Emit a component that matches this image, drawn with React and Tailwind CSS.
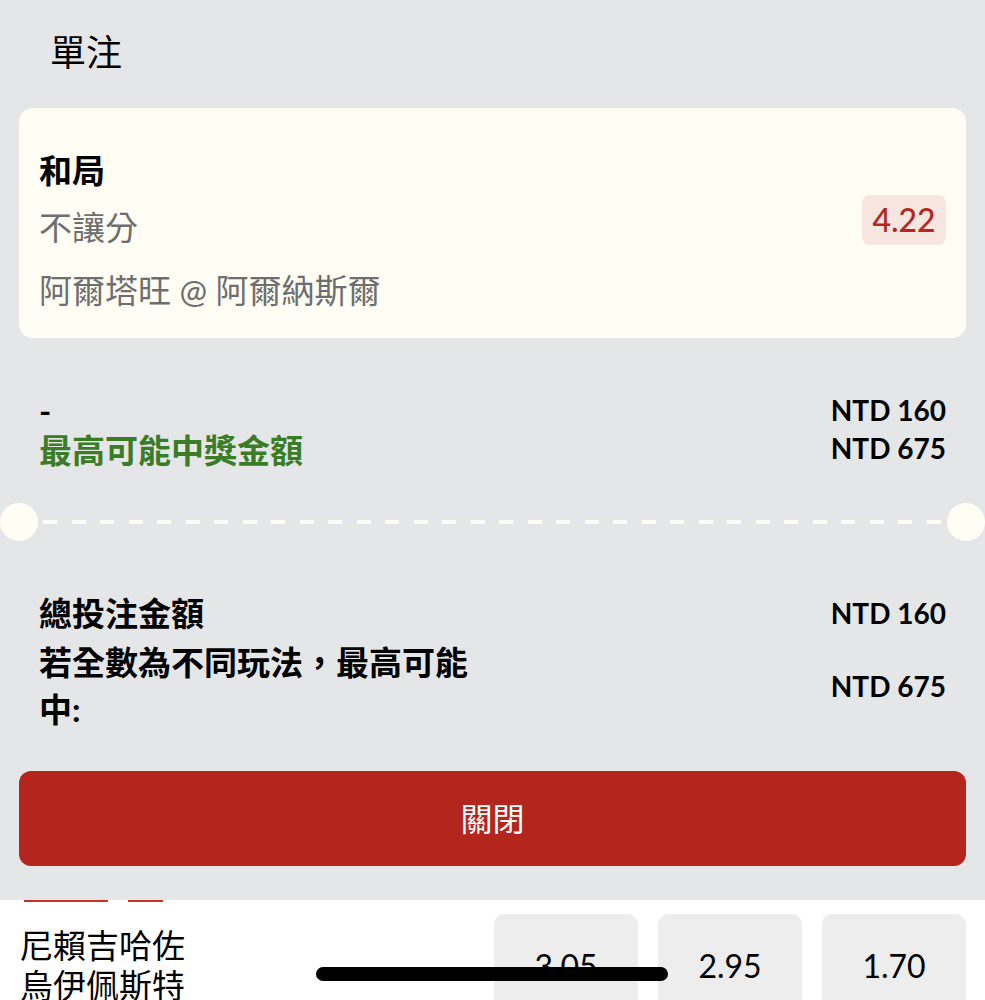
import React from "react"

const odds = ["3.05", "2.95", "1.70"]

const App = () => {
  return (
    <div className="relative min-h-screen overflow-hidden bg-white font-['Lato','Noto_Sans_CJK_TC',sans-serif] text-black">
      {/* Bet slip panel */}
      <div className="bg-[#e5e6e8] px-[19px] pb-[34px]">
        <h1 className="pl-[31px] pt-[32px] text-[36px] leading-[40px] font-normal">單注</h1>

        {/* Selection card */}
        <div className="mt-[36px] flex h-[230px] items-start justify-between rounded-[14px] bg-[#fffdf4] px-[20px] pt-[42px]">
          <div className="flex flex-col">
            <p className="text-[33px] leading-[40px] font-bold">和局</p>
            <p className="mt-[17px] text-[33px] leading-[40px] text-[#6e6e6e]">不讓分</p>
            <p className="mt-[23px] text-[33px] leading-[40px] text-[#6e6e6e]">阿爾塔旺 @ 阿爾納斯爾</p>
          </div>
          <div className="mt-[45px] flex h-[50px] w-[84px] items-center justify-center rounded-[8px] bg-[#f7e6df] text-[32px] font-medium text-[#b3271f]">
            4.22
          </div>
        </div>

        {/* Stake */}
        <div className="mt-[52px] flex justify-between px-[20px]">
          <div className="flex flex-col">
            <p className="text-[33px] leading-[40px] font-bold">-</p>
            <p className="text-[33px] leading-[40px] font-bold text-[#3b7d27]">最高可能中獎金額</p>
          </div>
          <div className="flex flex-col items-end text-[28px] font-bold">
            <p className="leading-[40px]">NTD 160</p>
            <p className="leading-[36px]">NTD 675</p>
          </div>
        </div>

        {/* Ticket cut line */}
        <div className="-mx-[19px] mt-[33px] flex items-center">
          <div className="h-[38px] w-[38px] shrink-0 rounded-full bg-[#fffdf4]" />
          <div className="mx-[5px] h-[4px] flex-1 bg-[repeating-linear-gradient(to_right,#fffdf4_0_14px,transparent_14px_28.5px)]" />
          <div className="h-[38px] w-[38px] shrink-0 rounded-full bg-[#fffdf4]" />
        </div>

        {/* Totals */}
        <div className="mt-[49px] px-[20px]">
          <div className="flex items-center justify-between">
            <p className="text-[33px] leading-[46px] font-bold">總投注金額</p>
            <p className="text-[28px] font-bold">NTD 160</p>
          </div>
          <div className="mt-[3px] flex items-center justify-between">
            <p className="w-[450px] text-[33px] leading-[47px] font-bold">若全數為不同玩法，最高可能中:</p>
            <p className="text-[28px] font-bold">NTD 675</p>
          </div>
        </div>

        <button className="mt-[38px] flex h-[95px] w-full items-center justify-center rounded-[12px] bg-[#b4261d] text-[32px] text-white">
          關閉
        </button>
      </div>

      {/* Match list behind the sheet */}
      <div className="flex gap-[20px] pl-[24px]">
        <div className="h-[2px] w-[84px] bg-[#c8312a]" />
        <div className="h-[2px] w-[35px] bg-[#c8312a]" />
      </div>
      <div className="flex justify-between pl-[20px] pr-[19px] pt-[12px]">
        <div className="pt-[11px] text-[33px] leading-[40px]">
          <p>尼賴吉哈佐</p>
          <p>烏伊佩斯特</p>
        </div>
        <div className="flex gap-[20px]">
          {odds.map((o) => (
            <div
              key={o}
              className="flex h-[104px] w-[144px] items-center justify-center rounded-[10px] bg-[#ededee] text-[32px]"
            >
              {o}
            </div>
          ))}
        </div>
      </div>

      {/* Home indicator */}
      <div className="absolute left-[316px] top-[967px] h-[14px] w-[352px] rounded-full bg-black" />
    </div>
  )
}

export default App
